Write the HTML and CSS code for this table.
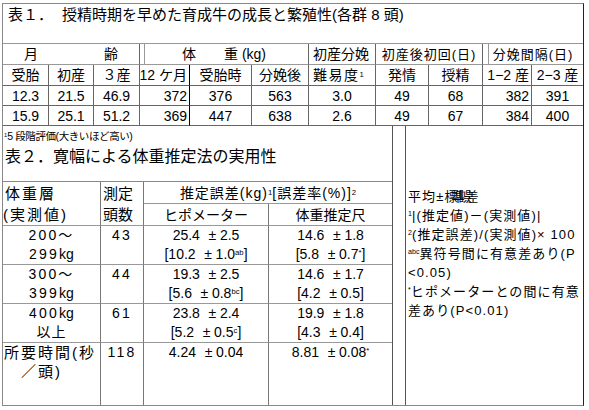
FILE: index.html
```html
<!DOCTYPE html>
<html lang="ja">
<head>
<meta charset="utf-8">
<title>表</title>
<link rel="stylesheet" href="styles.css">
</head>
<body>
<div class="frame">
  <div class="t1">
    <div class="title1"><span>表１．</span><span class="t1txt">授精時期を早めた育成牛の成長と繁殖性(各群 8 頭)</span></div>

    <div class="c h1 s3 age"><span>月</span><span>齢</span></div>
    <div class="c h1 s3 dbl5">体　　重 (kg)</div>
    <div class="c h1 lft">初産分娩</div>
    <div class="c h1 s2 sm">初産後初回(日)</div>
    <div class="c h1 s2 sm dbl6 last">分娩間隔(日)</div>

    <div class="c">受胎</div>
    <div class="c">初産</div>
    <div class="c">３産</div>
    <div class="c rgt k">12 ケ月</div>
    <div class="c">受胎時</div>
    <div class="c">分娩後</div>
    <div class="c lft ls">難易度<sup>1</sup></div>
    <div class="c">発情</div>
    <div class="c">授精</div>
    <div class="c rgt">1−2 産</div>
    <div class="c last">2−3 産</div>

    <div class="c">12.3</div>
    <div class="c">21.5</div>
    <div class="c">46.9</div>
    <div class="c rgt k">372</div>
    <div class="c">376</div>
    <div class="c">563</div>
    <div class="c">3.0</div>
    <div class="c">49</div>
    <div class="c">68</div>
    <div class="c rgt">382</div>
    <div class="c last">391</div>

    <div class="c">15.9</div>
    <div class="c">25.1</div>
    <div class="c">51.2</div>
    <div class="c rgt k">369</div>
    <div class="c">447</div>
    <div class="c">638</div>
    <div class="c">2.6</div>
    <div class="c">49</div>
    <div class="c">67</div>
    <div class="c rgt">384</div>
    <div class="c last">400</div>
  </div>

  <div class="lower">
    <div class="leftpart">
      <div class="fn"><sup>1</sup>5 段階評価(大きいほど高い)</div>
      <div class="title2">表２．寛幅による体重推定法の実用性</div>
      <div class="t2">
        <div class="d nb lft big">体重層</div>
        <div class="d nb lft mid">測定</div>
        <div class="d s2 last hd">推定誤差(kg)<sup>1</sup> [誤差率(%)]<sup>2</sup></div>

        <div class="d lft big paren">(実測値)</div>
        <div class="d lft mid">頭数</div>
        <div class="d hd2">ヒポメーター</div>
        <div class="d last hd2">体重推定尺</div>

        <div class="d two wide"><div>200～</div><div>299<span class="kg">kg</span></div></div>
        <div class="d two wide"><div>43</div><div></div></div>
        <div class="d two"><div>25.4<span class="pm">±</span>2.5</div><div>[10.2<span class="pm">±</span>1.0<sup>ab</sup>]</div></div>
        <div class="d two last"><div>14.6<span class="pm">±</span>1.8</div><div>[5.8<span class="pm">±</span>0.7<sup>*</sup>]</div></div>

        <div class="d two wide"><div>300～</div><div>399<span class="kg">kg</span></div></div>
        <div class="d two wide"><div>44</div><div></div></div>
        <div class="d two"><div>19.3<span class="pm">±</span>2.5</div><div>[5.6<span class="pm">±</span>0.8<sup>bc</sup>]</div></div>
        <div class="d two last"><div>14.6<span class="pm">±</span>1.7</div><div>[4.2<span class="pm">±</span>0.5]</div></div>

        <div class="d two wide"><div>400<span class="kg">kg</span></div><div class="cjk">以上</div></div>
        <div class="d two wide"><div>61</div><div></div></div>
        <div class="d two"><div>23.8<span class="pm">±</span>2.4</div><div>[5.2<span class="pm">±</span>0.5<sup>c</sup>]</div></div>
        <div class="d two last"><div>19.9<span class="pm">±</span>1.8</div><div>[4.3<span class="pm">±</span>0.4]</div></div>

        <div class="d two nb tl"><div class="big">所要時間(秒</div><div class="big ind">／頭)</div></div>
        <div class="d two nb wide"><div>118</div><div></div></div>
        <div class="d two nb"><div>4.24<span class="pm">±</span>0.04</div><div></div></div>
        <div class="d two nb last"><div>8.81<span class="pm">±</span>0.08<sup>*</sup></div><div></div></div>
      </div>
    </div>
    <div class="strip"></div>
    <div class="notes">
      <div>平均±<span class="squish">標準誤差</span></div>
      <div><sup>1</sup>|(推定値)－(実測値)|</div>
      <div><sup>2</sup>(推定誤差)/(実測値)× 100</div>
      <div><sup>abc</sup>異符号間に有意差あり(P</div>
      <div>&lt;0.05)</div>
      <div><sup>*</sup>ヒポメーターとの間に有意</div>
      <div>差あり(P&lt;0.01)</div>
    </div>
  </div>
</div>
</body>
</html>
```

FILE: styles.css
```css
* { box-sizing: border-box; }
html, body { margin: 0; padding: 0; background: #fff; }
body {
  font-family: "Liberation Sans", "Noto Sans CJK JP", sans-serif;
  color: #000;
  font-size: 14px;
}
sup { font-size: 0.55em; vertical-align: 0.55em; line-height: 0; letter-spacing: 0; }

.frame {
  margin: 3px 0 0 2px;
  width: 582px;
  height: 403px;
  border: 1px solid #888;
  border-right-color: #222;
  display: flex;
  flex-direction: column;
}

/* ---------- table 1 ---------- */
.t1 {
  display: grid;
  grid-template-columns: 46px 45px 46px 50px 62px 57px 67px 53px 54px 49px 51px;
  grid-template-rows: 40px 21px 21px 20px 20px;
}
.title1 {
  grid-column: 1 / -1;
  border-bottom: 1px solid #999;
  font-size: 15px;
  line-height: 20px;
  padding: 1px 0 0 5px;
  display: flex;
}
.t1txt { margin-left: 9px; }

.c {
  border-right: 1px solid #666;
  border-bottom: 1px solid #666;
  display: flex;
  align-items: center;
  justify-content: center;
  white-space: nowrap;
  line-height: 1;
}
.c.h1 { border-bottom-color: #999; }
.c.last { border-right: none; }
.c.k { border-right-color: #000; }
.s3 { grid-column: span 3; }
.s2 { grid-column: span 2; }
.age { justify-content: space-between; padding: 0 21px; }
.lft { justify-content: flex-start; padding-left: 4px; }
.rgt { justify-content: flex-end; padding-right: 2px; }
.sm { font-size: 13px; letter-spacing: 1px; }
.ls { letter-spacing: 1.5px; }
.dbl5 { box-shadow: inset 4px 0 0 #fff, inset 5px 0 0 #999; }
.dbl6 { box-shadow: inset 5px 0 0 #fff, inset 6px 0 0 #999; }

/* ---------- lower part ---------- */
.lower { flex: 1; display: flex; }
.leftpart {
  width: 390px;
  border-right: 1px solid #555;
  display: flex;
  flex-direction: column;
}
.fn { height: 21px; line-height: 21px; font-size: 10.5px; letter-spacing: -0.4px; padding-left: 1px; white-space: nowrap; }
.title2 { height: 20px; line-height: 20px; font-size: 16px; padding-left: 2px; white-space: nowrap; }

.t2 {
  margin-top: auto;
  border-top: 1px solid #888;
  display: grid;
  grid-template-columns: 98px 43px 125px 123px;
  grid-template-rows: 22px 22px 39px 39px 39px 62px;
}
.d {
  border-right: 1px solid #777;
  border-bottom: 1px solid #999;
  display: flex;
  align-items: center;
  justify-content: center;
  white-space: nowrap;
  line-height: 1;
  font-size: 14px;
}
.d.nb { border-bottom: none; }
.d.last { border-right: none; }
.d.lft { justify-content: flex-start; padding-left: 2px; }
.d.lft.paren { padding-left: 0; }
.big { font-size: 15px; letter-spacing: 2px; }
.mid { font-size: 15px; padding-left: 2px; }
.hd { font-size: 14px; letter-spacing: 1px; }
.hd2 { font-size: 14px; }

.two {
  flex-direction: column;
  justify-content: flex-start;
  align-items: center;
  line-height: 19px;
}
.two > div { height: 19px; }
.two.tl { align-items: flex-start; padding-left: 1px; }
.ind { padding-left: 17px; }
.wide { font-size: 14px; letter-spacing: 2.2px; }
.wide .kg { letter-spacing: 0; }
.wide .cjk { letter-spacing: 1px; }
.pm { display: inline-block; width: 15px; text-align: center; margin-left: 5px; }

.strip { width: 13px; border-right: 1px solid #555; }
.notes {
  width: 177px;
  padding: 61px 0 0 2px;
  font-size: 13px;
  line-height: 19px;
  letter-spacing: 1.1px;
  white-space: nowrap;
}
.notes > div { height: 19px; }
.squish { letter-spacing: -6px; }
```
